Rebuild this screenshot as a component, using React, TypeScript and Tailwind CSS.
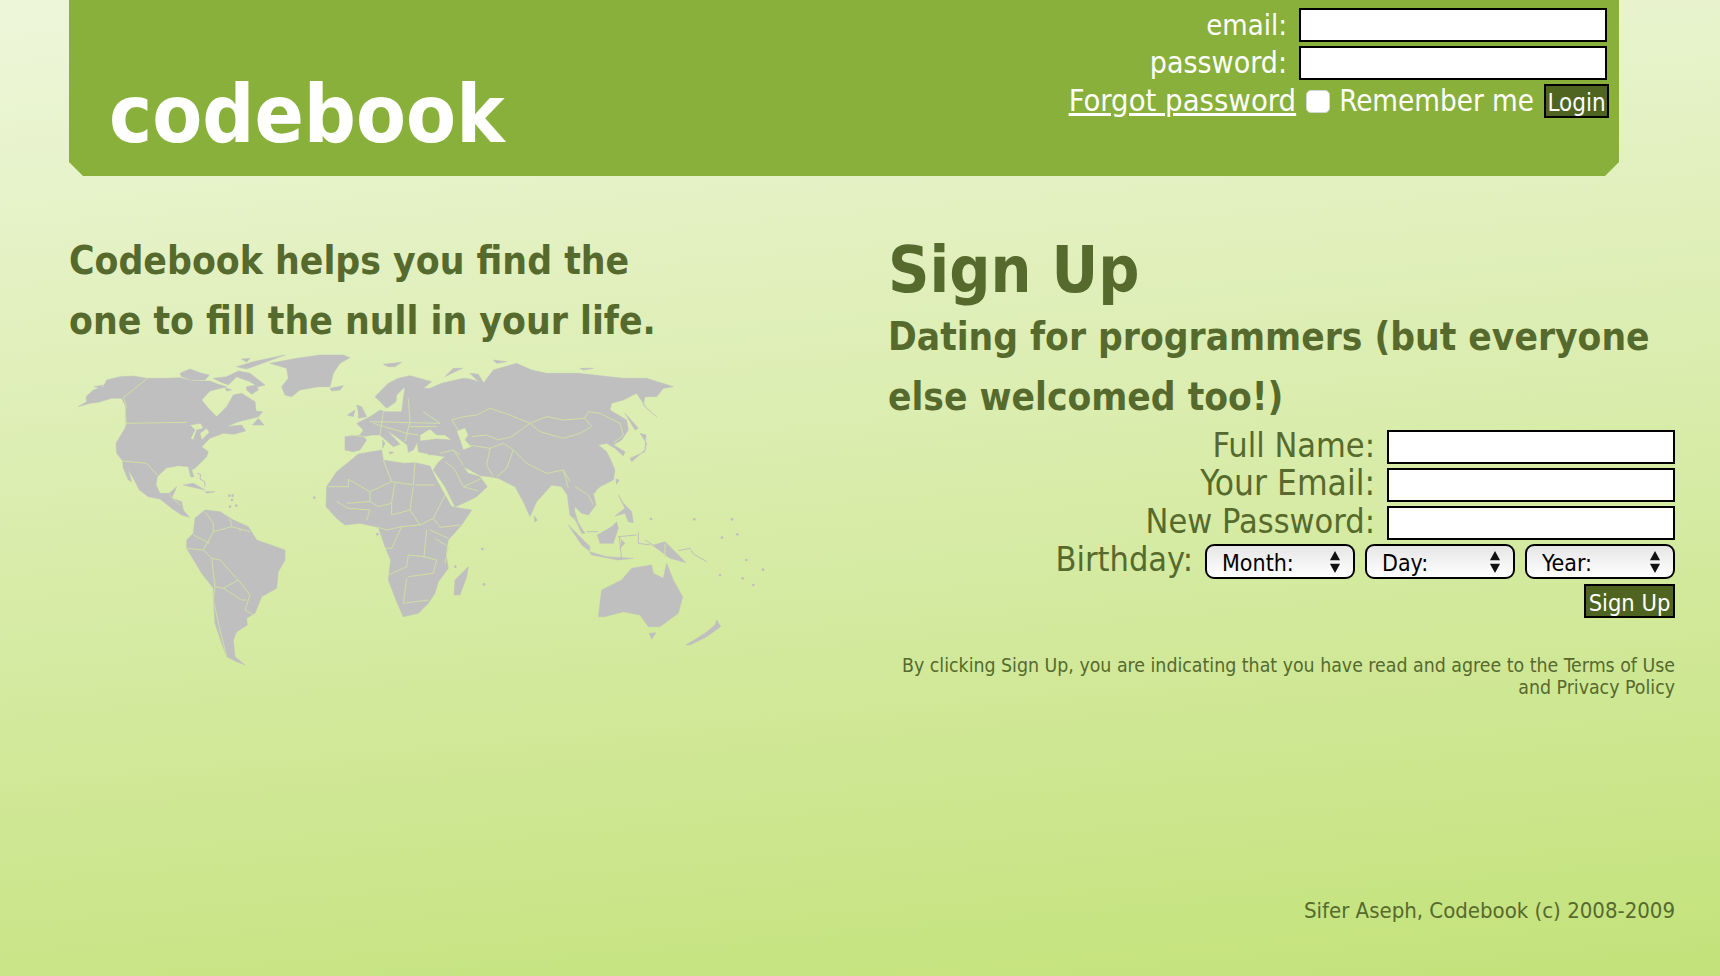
const OLIVE = "text-[#566a2d]";
const FIELD = "block h-[34px] border-2 border-black bg-white";
const BTN = "h-[34px] border-2 border-black bg-[#4e6420] text-white";

type MapPart = { at: string; land: string[]; lines: string[]; dots?: number[][]; thin?: string[] };

// each part is traced at 3x, so it sits in a group scaled by 1/3
const MAP_PARTS: MapPart[] = [
  {
    // north america, greenland
    at: "translate(20 5) scale(.3333)",
    land: [
      "M25 185L50 170L48 155L70 135L100 125L110 105L150 95L190 93L230 100L290 100L330 98L370 108L420 108L445 118L470 125L420 138L395 165L415 190L440 215L470 185L490 150L515 145L555 170L558 198L578 200L565 215L500 232L470 245L515 240L527 258L490 268L460 265L420 280L395 305L415 320L410 335L375 370L365 375L372 395L362 395L355 365L325 362L290 368L262 395L258 420L270 445L298 445L320 425L305 460L335 470L340 495L358 517L335 510L305 490L270 462L235 455L208 435L190 400L160 350L140 325L138 295L165 250L170 235L165 180L155 160L125 160L85 172L60 175ZM360 240L392 235L400 250L380 255L370 285L362 280L375 255ZM390 265L410 250L418 262L395 285Z",
      "M158 350L170 360L185 410L175 405L160 370Z",
      "M72 125L100 120L90 130Z",
      "M330 85L360 72L395 85L418 90L405 105L365 105L335 95Z",
      "M430 100L470 95L505 78L540 85L585 120L565 125L540 110L500 95L475 120L450 110Z",
      "M500 65L550 50L645 30L590 50L530 72ZM515 42L540 40L530 52ZM465 128L485 135L470 138ZM530 125L560 120L565 135L545 148L530 135ZM548 240L565 220L582 240Z",
      "M600 55L680 40L750 30L820 30L840 38L810 55L790 85L780 125L745 125L690 135L665 155L645 150L635 125L655 100L650 70Z",
      "M780 130L820 122L810 135L785 138Z",
      "M340 420L370 415L405 435L375 428ZM405 440L435 440L410 445Z",
    ],
    lines: ["M232 100L160 158L168 180L165 235L350 232", "M160 348L230 355L262 390", "M298 450L330 480"],
    dots: [[478, 452], [488, 452], [486, 465], [480, 485], [499, 482], [733, 458]],
    thin: ["M382 385L392 388L390 402L404 410L405 425"],
  },
  {
    // eurasia
    at: "translate(280 15) scale(.3333)",
    land: [
      "M45 285L45 245L90 240L100 225L80 205L120 185L150 165L165 170L215 170L220 130L225 95L200 120L198 140L170 160L135 125L175 85L205 70L240 62L305 80L280 100L300 100L335 85L400 70L420 72L460 85L490 45L560 25L605 45L650 55L745 55L880 70L950 70L1030 95L1000 100L980 125L945 125L940 150L980 185L950 160L920 115L880 135L845 145L840 165L890 195L895 225L875 255L850 270L885 290L880 303L855 280L830 265L805 270L830 290L840 310L855 345L850 375L810 395L790 415L798 450L775 480L755 475L735 455L730 490L750 510L720 480L712 420L695 395L665 390L620 440L600 485L580 440L555 395L505 370L480 365L450 362L420 345L400 335L415 355L450 365L472 395L440 425L400 445L375 455L345 395L310 345L325 322L345 305L310 300L265 290L262 262L250 285L235 292L232 270L205 250L170 225L210 268L190 275L150 240L125 240L100 245L110 255L90 285L70 290ZM270 240L300 222L320 240L345 240L365 255L320 252L270 258ZM380 228L405 218L415 240L405 255L425 275L400 285L390 255Z",
      "M80 150L95 155L110 185L85 190L85 170ZM52 180L75 165L70 185Z",
      "M160 28L215 22L195 35L175 35ZM345 65L370 40L398 40L365 55ZM490 15L530 20L500 25ZM750 40L790 40L760 45ZM420 55L445 58L465 90L440 75Z",
      "M885 175L925 220L915 225ZM900 310L945 290L950 265L930 235L948 240L945 285L905 320Z",
      "M858 372L868 375L860 388ZM790 405L800 400L795 415ZM612 482L622 495L615 502Z",
      "M158 255L165 265L158 280ZM178 290L192 292L180 298ZM295 295L310 297L296 300ZM325 297L336 295L328 302Z",
    ],
    lines: [
      "M365 195L400 185L440 180L480 160L540 180L600 205L650 185L700 195L765 190L775 170L810 175L870 205L880 240L850 265",
      "M600 205L630 230L700 250L750 235L785 215L765 190",
      "M365 195L385 225M425 245L470 240L505 255L545 245L600 205",
      "M415 270L480 280L470 330L490 365M480 280L520 265L550 285L530 340L500 365",
      "M550 285L590 325L650 355L700 345L720 380M700 345L715 400M735 395L775 420L790 450",
      "M330 295L370 285L400 330M345 320L372 340L400 395L452 372M400 395L445 408M370 285L390 300",
      "M120 200L330 205M160 170L150 240M235 130L240 200L225 260M130 205L230 235L265 240M280 170L330 205M240 215L320 215M60 240L105 245",
    ],
  },
  {
    // africa
    at: "translate(270 100) scale(.3333)",
    land: [
      "M20 140L50 95L75 75L115 42L185 30L190 60L250 70L285 68L330 78L350 120L375 165L395 200L455 210L425 255L385 300L378 340L385 385L355 425L345 460L325 490L295 520L250 530L232 490L205 420L212 360L195 320L175 262L120 250L75 255L50 235L18 200Z",
      "M445 380L440 410L420 465L402 465L405 420Z",
    ],
    lines: [
      "M25 140L85 140L85 118L150 155L150 185L80 190",
      "M150 155L215 125L190 60M215 125L280 135L285 68M285 135L345 135",
      "M225 130L215 185L215 225L270 210L300 255L340 235L375 165M270 210L280 140M340 235L360 262L420 255",
      "M150 185L175 200L215 190M50 185L85 205L150 210L140 240",
      "M175 262L200 270L245 260L300 255M245 260L215 325L195 325",
      "M320 270L312 350L265 345L260 380L205 405M345 295L385 320L375 370",
      "M265 410L340 400L350 360L312 350M260 415L250 490L325 480M330 270L385 295",
    ],
    dots: [[172, 283], [487, 327], [406, 380], [492, 433]],
  },
  {
    // south america
    at: "translate(120 160) scale(.3333)",
    land: [
      "M50 120L70 100L75 55L105 30L150 35L190 60L235 80L260 120L345 150L345 180L325 215L320 265L275 290L255 340L230 355L232 375L200 395L190 420L195 470L225 495L200 485L170 470L155 430L135 370L130 300L130 265L95 220L50 145Z",
    ],
    lines: [
      "M105 35L130 70L130 95L100 150L125 175L150 180L205 240L240 285L225 330L250 345",
      "M70 105L120 130M50 145L100 150M130 95L185 80L180 55M185 80L240 95M210 85L210 95",
      "M125 175L135 260L160 265L205 240M135 260L130 300L150 390L170 470M160 265L215 300L230 300",
    ],
  },
  {
    // asia islands, australia
    at: "translate(500 140) scale(.3333)",
    land: [
      "M145 410L155 330L215 300L245 265L305 255L310 280L340 295L350 250L370 300L398 350L385 400L330 440L295 440L270 405L220 395L165 410Z",
      "M298 460L318 458L305 478ZM408 495L465 460L495 435L500 420L512 440L470 470L420 495Z",
      "M55 135L85 165L120 200L118 212L95 195ZM118 215L170 230L250 235L205 240L125 225Z",
      "M142 165L185 140L200 125L205 145L190 190L150 190ZM205 170L225 190L210 205L215 180Z",
      "M205 45L220 70L245 95L250 128L235 125L225 100L195 108L225 85Z",
      "M285 180L310 195L345 185L375 215L408 248L360 235L320 205Z",
      "M70 80L85 130L105 160L95 160L70 105Z",
    ],
    lines: ["M345 190L345 232"],
    thin: ["M110 155L145 155M265 155L265 190L300 195M205 170L260 165M208 172L215 240M385 212L420 205L430 222L470 245"],
    dots: [[303, 117], [433, 118], [546, 118], [516, 173], [562, 163], [589, 240], [639, 269], [510, 285], [578, 295], [610, 315]],
  },
];

function WorldMap() {
  return (
    <svg viewBox="0 0 730 340" className="-ml-[19px] -mt-[11px] block h-[340px] w-[730px]">
      {MAP_PARTS.map((part) => (
        <g key={part.at} transform={part.at}>
          {part.land.map((d) => (
            <path key={d} d={d} fill="#bfbfbf" fillRule="evenodd" stroke="#bfbfbf" strokeWidth="1.5" strokeLinejoin="round" />
          ))}
          {part.lines.map((d) => (
            <path key={d} d={d} fill="none" stroke="#d0dfa5" strokeWidth="3" />
          ))}
          {part.thin?.map((d) => (
            <path key={d} d={d} fill="none" stroke="#bfbfbf" strokeWidth="3" />
          ))}
          {part.dots?.map(([x, y]) => (
            <circle key={`${x}-${y}`} cx={x} cy={y} r="4" fill="#bfbfbf" />
          ))}
        </g>
      ))}
    </svg>
  );
}

function DateSelect({ label }: { label: string }) {
  return (
    <div className="relative">
      <select className="block h-[35px] w-[150px] appearance-none rounded-[9px] border-2 border-black bg-gradient-to-b from-[#e6e6e6] to-white pl-[15px] text-[23px] text-black">
        <option>{label}</option>
      </select>
      <svg viewBox="0 0 12 26" className="pointer-events-none absolute right-[14px] top-[6px] h-[24px] w-[12px]">
        <path d="M6 1L11.5 11H.5ZM6 25L.5 15H11.5Z" fill="#111" />
      </svg>
    </div>
  );
}

function Row({ label, className }: { label: string; className?: string }) {
  return (
    <div className="flex items-center justify-end">
      <label className={`pb-[4px] leading-[30px] ${className ?? ""}`}>{label}</label>
      <input className={`${FIELD} ml-3 w-[288px]`} />
    </div>
  );
}

export default function App() {
  return (
    <div className="min-h-screen bg-[linear-gradient(175deg,#eef6da,#c3e27a)] font-['DejaVu_Sans_Condensed','DejaVu_Sans',sans-serif] [font-stretch:condensed]">
      <header className="ml-[69px] flex h-[176px] w-[1550px] items-start justify-between bg-[#88b03a] pr-[12px] [clip-path:polygon(0_0,100%_0,100%_calc(100%-14px),calc(100%-14px)_100%,14px_100%,0_calc(100%-14px))]">
        <h1 className="pl-[40px] pt-[64px] text-[81px] leading-[100px] font-bold text-white">codebook</h1>
        <div className="flex flex-col items-end gap-[4px] pt-[8px] text-[30px] leading-[34px] text-white">
          <div className="flex items-center">
            <label className="text-[29px]">email:</label>
            <input className={`${FIELD} ml-3 w-[308px]`} />
          </div>
          <div className="flex items-center">
            <label>password:</label>
            <input className={`${FIELD} ml-3 w-[308px]`} />
          </div>
          <div className="-mr-[2px] flex items-center">
            <a href="#" className="text-[30.7px] underline">Forgot password</a>
            <input type="checkbox" className="ml-[10px] mr-[9px] h-[23px] w-[24px] appearance-none rounded-[5px] border border-gray-300 bg-white" />
            <span className="text-[29.3px]">Remember me</span>
            <button className={`${BTN} ml-[10px] w-[65px] text-[24px]`}>Login</button>
          </div>
        </div>
      </header>

      <main className="flex justify-between pl-[69px] pr-[45px]">
        <section className="w-[600px] pt-[55px]">
          <h2 className={`text-[38.7px] leading-[60px] font-bold ${OLIVE}`}>
            Codebook helps you find the one to fill the null in your life.
          </h2>
          <WorldMap />
        </section>

        <section className={`w-[787px] pt-[57px] ${OLIVE}`}>
          <h2 className="text-[64px] leading-[74px] font-bold">Sign Up</h2>
          <h3 className="text-[38.5px] leading-[60px] font-bold">Dating for programmers (but everyone else welcomed too!)</h3>
          <form className="mt-[3px] flex flex-col gap-[4px] text-[34px] leading-[34px]">
            <Row label="Full Name:" />
            <Row label="Your Email:" className="text-[35px]" />
            <Row label="New Password:" />
            <div className="flex items-center justify-end gap-[10px]">
              <label className="mr-[2px] pb-[5px] leading-[29px]">Birthday:</label>
              <DateSelect label="Month:" />
              <DateSelect label="Day:" />
              <DateSelect label="Year:" />
            </div>
            <div className="mt-px flex justify-end">
              <button type="button" className={`${BTN} w-[91px] text-[23.5px]`}>Sign Up</button>
            </div>
          </form>
          <p className="mt-[37px] text-right text-[19.35px] leading-[22px]">
            By clicking Sign Up, you are indicating that you have read and agree to the Terms of Use and Privacy Policy
          </p>
          <p className="mt-[200px] text-right text-[22px] leading-[24px]">Sifer Aseph, Codebook (c) 2008-2009</p>
        </section>
      </main>
    </div>
  );
}
